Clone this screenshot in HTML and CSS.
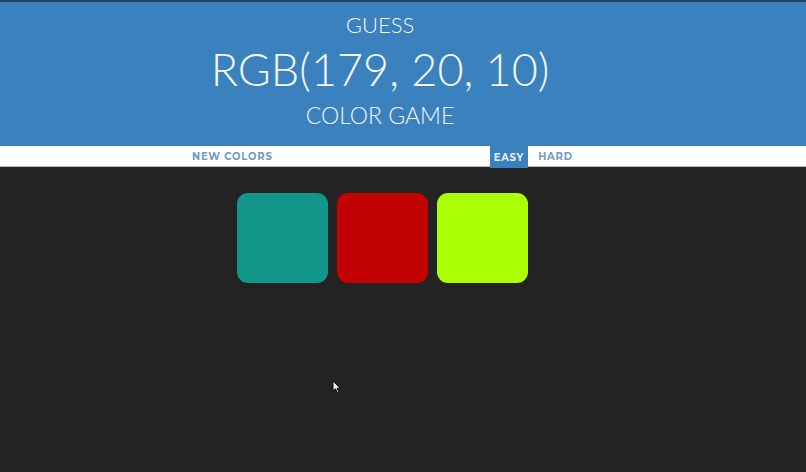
FILE: index.html
```html
<!DOCTYPE html>
<html>
<head>
<meta charset="utf-8">
<link rel="stylesheet" href="styles.css">
</head>
<body>
<header class="header">
  <div class="title-small">GUESS</div>
  <div class="title-big">RGB(179, 20, 10)</div>
  <div class="title-mid">COLOR GAME</div>
</header>
<nav class="stripe">
  <button class="btn btn-new">NEW COLORS</button>
  <span class="message"></span>
  <button class="btn btn-mode selected">EASY</button>
  <button class="btn btn-mode btn-hard">HARD</button>
</nav>
<main class="board">
  <div class="square sq-teal"></div>
  <div class="square sq-red"></div>
  <div class="square sq-lime"></div>
</main>
<svg class="cursor" width="9" height="14" viewBox="0 0 9 14">
  <path d="M1 1 L1 11 L3.5 8.8 L5.3 12.6 L6.8 11.9 L5.1 8.3 L8 8.1 Z" fill="#eeeeee" stroke="#111" stroke-width="1"/>
</svg>
</body>
</html>
```

FILE: styles.css
```css
html, body {
  margin: 0;
  padding: 0;
}
body {
  background: #232323;
  width: 806px;
  height: 472px;
  overflow: hidden;
  position: relative;
  font-family: Lato, "Noto Sans", sans-serif;
}
.header {
  border-top: 2px solid #24456a;
  background: #3a81bd;
  color: #f2f6fa;
  height: 146px;
  box-sizing: border-box;
  padding: 11px 46px 0 0;
  display: flex;
  flex-direction: column;
  align-items: center;
  font-weight: 300;
}
.title-small {
  font-size: 22px;
  line-height: 24px;
}
.title-big {
  font-size: 45px;
  line-height: 54px;
  margin-top: 5px;
}
.title-mid {
  font-size: 23px;
  line-height: 28px;
  margin-top: 5px;
}
.stripe {
  background: #ffffff;
  height: 20px;
  border-bottom: 1px solid #b9b9b9;
  display: flex;
  align-items: stretch;
  padding-left: 182px;
}
.btn {
  border: none;
  background: none;
  font-family: Montserrat, "Open Sans", sans-serif;
  font-weight: 700;
  font-size: 10px;
  letter-spacing: 0.8px;
  color: #6f9bc6;
  padding: 0 10px;
  margin: 0;
  cursor: pointer;
}
.message {
  width: 207px;
}
.btn-mode {
  padding: 0 4px;
}
.btn-hard {
  padding: 0 8px 0 10px;
}
.selected {
  background: #3a81bd;
  color: #e8f0f8;
  margin-bottom: -2px;
}
.board {
  display: flex;
  gap: 9px;
  padding: 26px 0 0 237px;
}
.square {
  width: 91px;
  height: 90px;
  border-radius: 11px;
}
.sq-teal { background: #12978a; }
.sq-red { background: #c20202; }
.sq-lime { background: #aaff02; }
.cursor {
  position: absolute;
  left: 332px;
  top: 380px;
}
```
